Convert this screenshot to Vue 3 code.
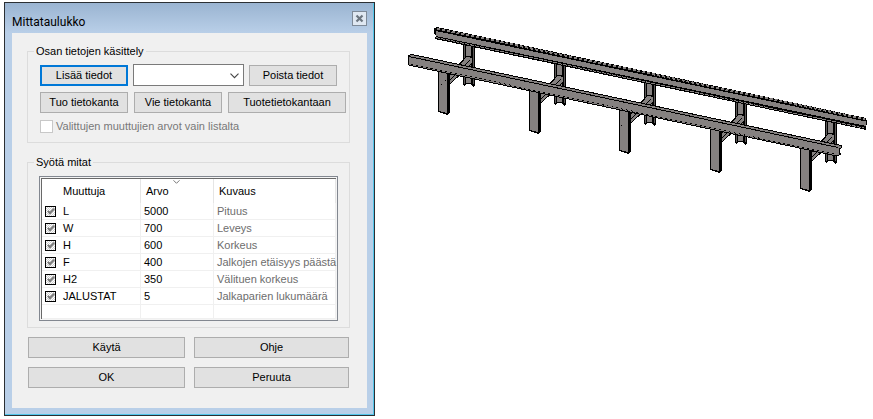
<script setup>
import { ref } from "vue";

const rows = ref([
  { name: "L", value: "5000", text: "Pituus", on: true },
  { name: "W", value: "700", text: "Leveys", on: true },
  { name: "H", value: "600", text: "Korkeus", on: true },
  { name: "F", value: "400", text: "Jalkojen etäisyys päästä", on: true },
  { name: "H2", value: "350", text: "Välituen korkeus", on: true },
  { name: "JALUSTAT", value: "5", text: "Jalkaparien lukumäärä", on: true }
]);

const selected = ref("");

// offset of each leg pair along the beams
const pairs = [0, 1, 2, 3, 4].map((i) => ({
  id: i,
  move: `translate(${Math.round(i * 90.6)} ${Math.round(i * 19.3)})`
}));
</script>

<template>
  <main class="page">
    <section class="dialog" role="dialog" aria-labelledby="dialog-title">
      <header class="titlebar">
        <h1 id="dialog-title" class="titlebar__text">Mittataulukko</h1>
        <button class="close" type="button" aria-label="Sulje">
          <svg width="9" height="9" viewBox="0 0 9 9" aria-hidden="true">
            <path d="M1.5 1.5 L7.5 7.5 M7.5 1.5 L1.5 7.5" stroke="#6c7680" stroke-width="2.2" />
          </svg>
        </button>
      </header>

      <div class="client">
        <fieldset class="group">
          <legend>Osan tietojen käsittely</legend>
          <div class="tools">
            <div class="tools__row">
              <button class="btn btn--default" type="button">Lisää tiedot</button>
              <div class="combo">
                <select v-model="selected" aria-label="Tiedot">
                  <option value=""></option>
                </select>
                <svg class="combo__arrow" width="9" height="6" viewBox="0 0 9 6" aria-hidden="true">
                  <path d="M0.5 0.7 L4.5 4.7 L8.5 0.7" fill="none" stroke="#444" stroke-width="1.1" />
                </svg>
              </div>
              <button class="btn" type="button">Poista tiedot</button>
            </div>
            <div class="tools__row tools__row--db">
              <button class="btn" type="button">Tuo tietokanta</button>
              <button class="btn" type="button">Vie tietokanta</button>
              <button class="btn btn--wide" type="button">Tuotetietokantaan</button>
            </div>
            <label class="check">
              <input type="checkbox" disabled />
              <span>Valittujen muuttujien arvot vain listalta</span>
            </label>
          </div>
        </fieldset>

        <fieldset class="group group--values">
          <legend>Syötä mitat</legend>
          <div class="list">
            <table>
              <colgroup>
                <col class="col-name" />
                <col class="col-value" />
                <col />
              </colgroup>
              <thead>
                <tr>
                  <th class="name">Muuttuja</th>
                  <th class="sorted">
                    Arvo
                    <svg class="sort" width="7" height="4" viewBox="0 0 7 4" aria-hidden="true">
                      <path d="M0.5 0.3 L3.5 3.3 L6.5 0.3" fill="none" stroke="#777" />
                    </svg>
                  </th>
                  <th>Kuvaus</th>
                </tr>
              </thead>
              <tbody>
                <tr v-for="row in rows" :key="row.name">
                  <td>
                    <label class="variable">
                      <input v-model="row.on" type="checkbox" />
                      <span>{{ row.name }}</span>
                    </label>
                  </td>
                  <td>{{ row.value }}</td>
                  <td class="desc">{{ row.text }}</td>
                </tr>
                <tr class="blank">
                  <td></td>
                  <td></td>
                  <td></td>
                </tr>
              </tbody>
            </table>
          </div>
        </fieldset>

        <div class="actions">
          <button class="btn" type="button">Käytä</button>
          <button class="btn" type="button">Ohje</button>
          <button class="btn" type="button">OK</button>
          <button class="btn" type="button">Peruuta</button>
        </div>
      </div>
    </section>

    <div class="model">
      <svg viewBox="375 0 498 419" shape-rendering="crispEdges" role="img" aria-label="Teline">
        <!-- back posts -->
        <g v-for="p in pairs" :key="`post-${p.id}`" :transform="p.move">
          <path d="M463 42 L475 44 L475 86 L473 87 L471 84 L466 84 L464 86 L463 85 Z" fill="#000" />
          <path d="M466 44 H471 V83 H466 Z" fill="#858180" />
          <path d="M464.5 44 V84 M473.5 46 V84" stroke="#5c5958" fill="none" />
        </g>

        <!-- braces -->
        <g v-for="p in pairs" :key="`brace-${p.id}`" :transform="p.move">
          <path d="M449 76 L466 57 L469 56 L472 58 L472 63 L450 84 Z" fill="#858180" stroke="#000" />
          <path d="M450 80 L470 60" stroke="#000" fill="none" />
        </g>

        <!-- back beam -->
        <path d="M434 28 L437 27 L866 118 L867 121 L866 130 L862 129 L435 39 L436 36 L434 34 Z" fill="#000" />
        <path d="M436 31 L866 121.5 L866 126 L436 36 Z" fill="#858180" />
        <path d="M437 28.5 L865 119" stroke="#858180" stroke-width="2" stroke-dasharray="3 2" />
        <path d="M436 30.5 L866 121" stroke="#000" />
        <path d="M436 37.5 L864 128" stroke="#858180" stroke-dasharray="4 1" />

        <!-- front legs -->
        <g v-for="p in pairs" :key="`leg-${p.id}`" :transform="p.move">
          <path d="M438 68 L450 70 L450 113 L447 115 L438 112 Z" fill="#000" />
          <path d="M439 68 H447 V113 L439 111 Z" fill="#858180" />
        </g>
        <path d="M441 84 h1 v1 h-1 Z M445 80 h1 v1 h-1 Z M621 125 h1 v1 h-1 Z" fill="#000" />

        <!-- front beam -->
        <path
          d="M408.5 55.5 L412 54.5 L841 145.5 L841 148 L839 149 L839 153 L841 154 L837 156 L408.5 65 Z"
          fill="#858180"
          stroke="#000"
        />
        <path d="M409 56.5 L838 147.5" stroke="#000" />
        <path d="M412 55.5 L840 146.5" stroke="#858180" stroke-dasharray="3 2" />
        <path d="M411 64 L836 154.5" stroke="#000" stroke-dasharray="2 3" />
      </svg>
    </div>
  </main>
</template>

<style>
body {
  margin: 0;
  background: #fff;
}
</style>

<style scoped>
.page {
  display: flex;
  align-items: flex-start;
  color: #000;
  font-family: "Liberation Sans", Arial, sans-serif;
  font-size: 11px;
  line-height: 15px;
}

.dialog {
  box-sizing: border-box;
  flex: 0 0 371px;
  margin: 2px 0 0 4px;
  padding: 0 7px 7px;
  border: 1px solid #2b2f33;
  background: linear-gradient(#9ab4d1, #b9cfe8 30px);
  box-shadow: inset -1px -1px #52c6ea;
}

.titlebar {
  display: flex;
  align-items: center;
  justify-content: space-between;
  height: 30px;
}

.titlebar__text {
  margin: 8px 0 0;
  font-family: Roboto, "Liberation Sans", sans-serif;
  font-size: 12px;
  font-weight: 400;
}

.close {
  display: grid;
  place-items: center;
  width: 15px;
  height: 15px;
  padding: 0;
  border: 1px solid #7e8a98;
  background: #dfe8f2;
}

.client {
  padding: 11px 17px 20px 15px;
  background: #f0f0f0;
}

.group {
  min-width: 0;
  margin: 0;
  padding: 0;
  border: 1px solid #dcdcdc;
}

.group--values {
  margin-top: 12px;
}

legend {
  margin-left: 6px;
  padding: 0 2px;
}

.tools {
  padding: 5px 3px 9px 12px;
}

.tools__row {
  display: flex;
  align-items: flex-end;
  gap: 5px;
}

.tools__row--db {
  gap: 6px;
  margin: 6px 0 7px;
}

.btn {
  box-sizing: border-box;
  width: 88px;
  height: 21px;
  padding: 0;
  border: 1px solid #adadad;
  background: #e1e1e1;
  color: #000;
  font: inherit;
  white-space: nowrap;
}

.btn--default {
  border: 2px solid #0078d7;
}

.btn--wide {
  width: 118px;
}

.combo {
  position: relative;
  width: 111px;
  height: 22px;
}

.combo select {
  box-sizing: border-box;
  width: 100%;
  height: 100%;
  border: 1px solid #7a7a7a;
  border-radius: 0;
  background: #fff;
  appearance: none;
  font: inherit;
}

.combo__arrow {
  position: absolute;
  top: 9px;
  right: 5px;
  pointer-events: none;
}

.check {
  display: flex;
  align-items: center;
  gap: 3px;
  height: 13px;
  color: #787878;
}

.check input {
  box-sizing: border-box;
  width: 13px;
  height: 13px;
  margin: 0;
  border: 1px solid #c8c8c8;
  background: #fff;
  appearance: none;
}

.list {
  margin: 6px 11px;
  padding: 1px;
  border: 1px solid #828790;
  background: #f4f4f4;
}

table {
  width: 100%;
  border-top: 1px solid #696969;
  border-left: 1px solid #696969;
  border-collapse: separate;
  border-spacing: 0;
  background: #fff;
  table-layout: fixed;
}

.col-name {
  width: 99px;
}

.col-value {
  width: 73px;
}

th {
  height: 24px;
  padding: 0 0 0 5px;
  border-right: 1px solid #e5e5e5;
  font-weight: 400;
  text-align: left;
}

th.name {
  padding-left: 21px;
}

.sorted {
  position: relative;
}

.sort {
  position: absolute;
  top: 1px;
  left: 32px;
}

td {
  box-sizing: border-box;
  height: 17px;
  padding: 0 0 0 3px;
  border-right: 1px solid #f0f0f0;
  border-bottom: 1px solid #f0f0f0;
  white-space: nowrap;
}

.blank td {
  height: 14px;
}

.desc {
  color: #6d6d6d;
}

.variable {
  display: flex;
  align-items: center;
  gap: 7px;
}

.variable input {
  position: relative;
  box-sizing: border-box;
  width: 11px;
  height: 11px;
  margin: 0;
  border: 1px solid #000;
  background: repeating-conic-gradient(#d0d0d0 0 25%, #fff 0 50%) 0 0 / 2px 2px;
  appearance: none;
}

.variable input:checked::after {
  position: absolute;
  top: 0;
  left: 3px;
  width: 2px;
  height: 5px;
  border: solid #7c7c7c;
  border-width: 0 2px 2px 0;
  content: "";
  transform: rotate(45deg);
}

.actions {
  display: grid;
  grid-template-columns: 157px 1fr;
  gap: 9px;
  padding: 9px 1px 0;
}

.actions .btn {
  width: 100%;
}

.model {
  flex: 1;
  min-width: 0;
}

.model svg {
  display: block;
  width: 100%;
}
</style>
